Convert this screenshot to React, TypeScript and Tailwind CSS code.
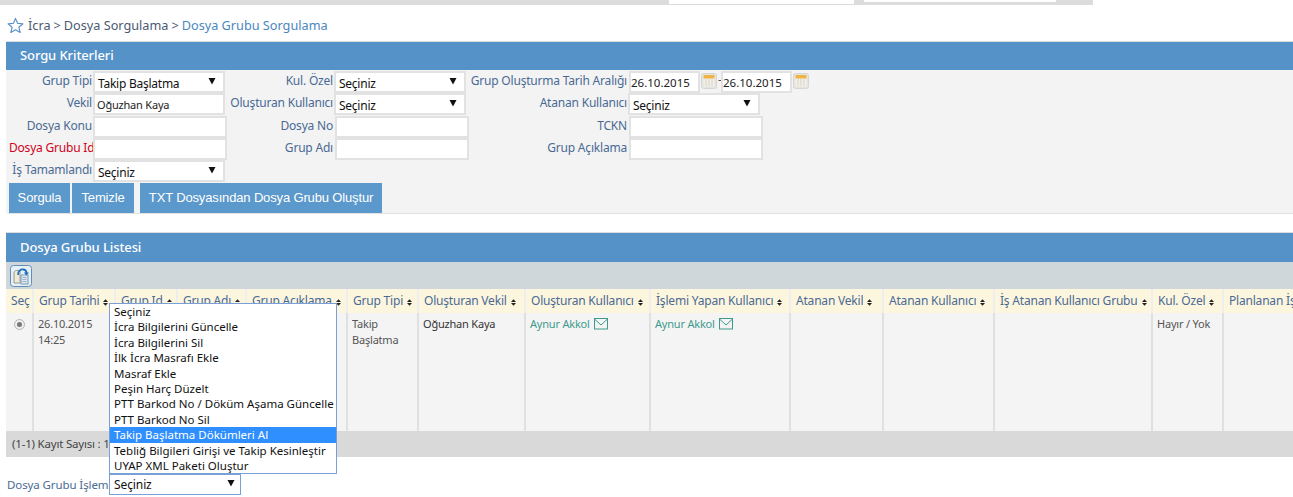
const ff = "font-['Noto_Sans','Open_Sans',sans-serif]";

function Tri() {
  return (
    <svg width="8" height="8" viewBox="0 0 8 8" className="shrink-0 mb-[3px]">
      <path d="M0.5 1H7.5L4 7.5Z" fill="#111" />
    </svg>
  );
}

function Select({ w, text }: { w: string; text: string }) {
  return (
    <div className={`${w} h-[22px] bg-white border-2 border-[#e2e2e2] flex items-center justify-between pl-[3px] pr-[7px] text-[12px] tracking-[-0.25px] text-[#111] leading-none`}>
      <span className="pt-[3px]">{text}</span>
      <Tri />
    </div>
  );
}

function Input({ w = "w-[134px]", text = "", className = "" }: { w?: string; text?: string; className?: string }) {
  return (
    <div className={`${w} h-[22px] bg-white border-2 border-[#e2e2e2] flex items-center pt-px text-[#222] leading-none whitespace-nowrap ${className}`}>
      {text}
    </div>
  );
}

function Label({ children, red }: { children: React.ReactNode; red?: boolean }) {
  return (
    <div className={`text-right pb-[3px] pr-px text-[12px] tracking-[-0.2px] leading-[18px] whitespace-nowrap ${red ? "text-[#d0021b]" : "text-[#4a6a94]"}`}>
      {children}
    </div>
  );
}

function Cal() {
  return (
    <svg width="16" height="16" viewBox="0 0 16 16" className="mx-[1px] mb-[2px] shrink-0">
      <rect x="0.5" y="0.5" width="15" height="15" rx="2" fill="#e4e4e2" stroke="#d6d6d4" />
      <rect x="2.5" y="2" width="11" height="11.5" fill="#f3f0e6" />
      <rect x="2.5" y="2" width="11" height="3.5" fill="#efb446" />
      <path d="M5 6V13M8 6V13M11 6V13" stroke="#d6d3ca" strokeWidth="1" />
    </svg>
  );
}

function PanelHeader({ title, h }: { title: string; h: string }) {
  return (
    <div className={`${h} bg-[#5592c8] text-white text-[13px] font-medium tracking-[-0.1px] flex items-center pl-[14px] border-t border-[#dcdcdc]`}>
      {title}
    </div>
  );
}

function Btn({ children, w }: { children: React.ReactNode; w: string }) {
  return (
    <div className={`${w} h-[30px] bg-[#5b98cb] text-white text-[13px] tracking-[-0.15px] font-['Liberation_Sans',sans-serif] flex items-center justify-center`}>
      {children}
    </div>
  );
}

function Sort() {
  return (
    <svg width="5" height="7" viewBox="0 0 6 8" className="inline-block ml-[4px] align-[-0.5px]">
      <path d="M3 0L6 3.3H0ZM3 8L0 4.7H6Z" fill="#222" />
    </svg>
  );
}

function Mail() {
  return (
    <svg width="14" height="12" viewBox="0 0 14 12" className="inline-block ml-[4px] align-[-2px]" fill="none" stroke="#3f9a8e">
      <rect x="0.5" y="0.5" width="13" height="10.5" />
      <path d="M0.5 1L7 7L13.5 1" />
    </svg>
  );
}

const cols = [
  { w: "w-[27px]", t: "Seç", sort: false },
  { w: "w-[82px]", t: "Grup Tarihi", sort: true },
  { w: "w-[62px]", t: "Grup Id", sort: true },
  { w: "w-[69px]", t: "Grup Adı", sort: true },
  { w: "w-[101px]", t: "Grup Açıklama", sort: true },
  { w: "w-[71px]", t: "Grup Tipi", sort: true },
  { w: "w-[107px]", t: "Oluşturan Vekil", sort: true },
  { w: "w-[125px]", t: "Oluşturan Kullanıcı", sort: true },
  { w: "w-[140px]", t: "İşlemi Yapan Kullanıcı", sort: true },
  { w: "w-[93px]", t: "Atanan Vekil", sort: true },
  { w: "w-[111px]", t: "Atanan Kullanıcı", sort: true },
  { w: "w-[158px]", t: "İş Atanan Kullanıcı Grubu", sort: true },
  { w: "w-[71px]", t: "Kul. Özel", sort: true },
  { w: "w-[120px]", t: "Planlanan İş", sort: false },
];

const options = [
  "Seçiniz",
  "İcra Bilgilerini Güncelle",
  "İcra Bilgilerini Sil",
  "İlk İcra Masrafı Ekle",
  "Masraf Ekle",
  "Peşin Harç Düzelt",
  "PTT Barkod No / Döküm Aşama Güncelle",
  "PTT Barkod No Sil",
  "Takip Başlatma Dökümleri Al",
  "Tebliğ Bilgileri Girişi ve Takip Kesinleştir",
  "UYAP XML Paketi Oluştur",
];

export default function App() {
  const cell = "border-r-2 border-[#e0e0e0] align-top pl-[4px] pt-[3px] text-[11px] tracking-[-0.2px] leading-[16px]";
  return (
    <div className={`w-[1293px] h-[497px] overflow-hidden bg-white relative ${ff}`}>
      {/* top strip */}
      <div className="w-[1093px] h-[5px] bg-[#dcdcdc] flex">
        <div className="ml-[669px] w-[185px] h-[4px] bg-white" />
        <div className="ml-[10px] w-[192px] h-[2px] bg-white" />
      </div>

      {/* breadcrumb */}
      <div className="h-[36px] pl-[7px] pt-[4px] flex items-center text-[12.7px] text-[#4a5a72] leading-none">
        <svg width="17" height="17" viewBox="0 0 24 24" fill="none" stroke="#5a8fc8" strokeWidth="1.6" strokeLinejoin="round" className="mr-[4px]">
          <path d="M12 2l3 7 7.5.6-5.7 4.9 1.8 7.4L12 18l-6.6 3.9 1.8-7.4L1.5 9.6 9 9z" />
        </svg>
        <span>İcra</span>
        <span className="mx-[3px]">&gt;</span>
        <span>Dosya Sorgulama</span>
        <span className="mx-[3px]">&gt;</span>
        <span className="text-[#4a87c0]">Dosya Grubu Sorgulama</span>
      </div>

      {/* criteria panel */}
      <div className="ml-[6px] rounded-bl-[4px] border-b border-[#e2e2e2] bg-[#f3f3f3]">
        <PanelHeader title="Sorgu Kriterleri" h="h-[29px]" />
        <div className="h-[143px] pl-[3px] pt-[1px]">
          <div className="grid grid-cols-[84px_136px_105px_135px_159px_1fr] grid-rows-[22px_22px_23px_22px_22px] items-end">
            <Label>Grup Tipi</Label>
            <Select w="w-[132px]" text="Takip Başlatma" />
            <Label>Kul. Özel</Label>
            <Select w="w-[132px]" text="Seçiniz" />
            <Label>Grup Oluşturma Tarih Aralığı</Label>
            <div className="flex items-center ml-px">
              <Input w="w-[71px]" text="26.10.2015" className="text-[11.5px]" />
              <Cal />
              <span className="w-[3px] text-[12px] text-[#555] pb-[4px] leading-none">-</span>
              <Input w="w-[71px]" text="26.10.2015" className="text-[11.5px]" />
              <Cal />
            </div>

            <Label>Vekil</Label>
            <Input w="w-[132px]" text="Oğuzhan Kaya" className="pl-[2px] text-[11px] tracking-[-0.2px]" />
            <Label>Oluşturan Kullanıcı</Label>
            <Select w="w-[132px]" text="Seçiniz" />
            <Label>Atanan Kullanıcı</Label>
            <Select w="w-[132px]" text="Seçiniz" />

            <Label>Dosya Konu</Label>
            <Input />
            <Label>Dosya No</Label>
            <Input className="ml-px" />
            <Label>TCKN</Label>
            <Input className="ml-px" />

            <Label red>Dosya Grubu Id</Label>
            <Input />
            <Label>Grup Adı</Label>
            <Input className="ml-px" />
            <Label>Grup Açıklama</Label>
            <Input className="ml-px" />

            <Label>İş Tamamlandı</Label>
            <Select w="w-[132px]" text="Seçiniz" />
          </div>
          <div className="flex gap-[2px] mt-[1px]">
            <Btn w="w-[61px]">Sorgula</Btn>
            <Btn w="w-[62px]">Temizle</Btn>
            <div className="w-[2px]" />
            <Btn w="w-[242px]">TXT Dosyasından Dosya Grubu Oluştur</Btn>
          </div>
        </div>
      </div>

      {/* list panel */}
      <div className="ml-[6px] mt-[18px]">
        <PanelHeader title="Dosya Grubu Listesi" h="h-[30px]" />
        <div className="h-[27px] bg-[#cfd7db] flex items-center pl-[4px]">
          <svg width="22" height="22" viewBox="0 0 22 22">
            <rect x="0.5" y="0.5" width="21" height="21" rx="3" fill="#e6f0f8" stroke="#5f8db5" />
            <path d="M4 18V8C4 6.5 5 5.5 6.5 5.5H10V18Z" fill="#efe9d8" stroke="#9a9a8c" />
            <rect x="11" y="10" width="7" height="9" fill="#dce9f4" stroke="#7d97ad" />
            <path d="M12.5 12.5H16.5M12.5 14.5H16.5M12.5 16.5H16.5" stroke="#8aa4ba" strokeWidth="0.8" />
            <path d="M8 10C8 6 10.5 4 13.5 4.5C15.5 4.8 16.5 6 16.5 8" stroke="#1f70bd" strokeWidth="1.8" fill="none" />
            <path d="M13.8 7.5H19L16.4 10.5Z" fill="#1f70bd" />
          </svg>
        </div>
        <table className="table-fixed border-collapse w-[1337px]">
          <thead>
            <tr className="h-[24px] bg-[#fdf6df]">
              {cols.map((c) => (
                <th key={c.t} className={`${c.w} border-r-2 border-[#eeeeee] font-normal text-left text-[12px] tracking-[-0.2px] text-[#4a6a94] whitespace-nowrap pl-[5px] p-0`}>
                  {c.t}
                  {c.sort && <Sort />}
                </th>
              ))}
            </tr>
          </thead>
          <tbody>
            <tr className="h-[118px] bg-[#f4f4f4] text-[#555]">
              <td className={cell}>
                <div className="w-[11px] h-[11px] mt-[3px] ml-[4px] rounded-full border border-[#b5b5b5] bg-[#eee] flex items-center justify-center">
                  <div className="w-[5px] h-[5px] rounded-full bg-[#777]" />
                </div>
              </td>
              <td className={cell}>26.10.2015<br />14:25</td>
              <td className={cell} />
              <td className={cell} />
              <td className={cell} />
              <td className={cell}>Takip<br />Başlatma</td>
              <td className={`${cell} text-[#333] whitespace-nowrap`}>Oğuzhan Kaya</td>
              <td className={`${cell} text-[#3f9a8e] whitespace-nowrap`}>Aynur Akkol<Mail /></td>
              <td className={`${cell} text-[#3f9a8e] whitespace-nowrap`}>Aynur Akkol<Mail /></td>
              <td className={cell} />
              <td className={cell} />
              <td className={cell} />
              <td className={cell}>Hayır / Yok</td>
              <td className={cell} />
            </tr>
          </tbody>
        </table>
        <div className="h-[26px] bg-[#d9d9d9] pl-[6px] text-[11.5px] tracking-[-0.2px] leading-[26px] text-[#444]">(1-1) Kayıt Sayısı : 1</div>
      </div>

      {/* bottom action */}
      <div className="flex items-center pl-[7px] mt-[17px] text-[11.5px] tracking-[-0.1px] text-[#4a6a94] leading-none">
        <span className="w-[102px] whitespace-nowrap">Dosya Grubu İşlem</span>
        <div className="w-[132px] h-[21px] bg-white border border-[#7a9fd6] flex items-center justify-between pl-[4px] pr-[5px] text-[12px] text-[#111]">
          <span className="pt-px">Seçiniz</span>
          <Tri />
        </div>
      </div>

      {/* open dropdown overlay */}
      <div className="absolute left-[109px] top-[303px] w-[228px] bg-white border border-[#7a9fd6] text-[11.5px] text-[#111]">
        {options.map((o) => (
          <div key={o} className={`h-[15.4px] leading-[15.4px] pl-[4px] whitespace-nowrap ${o.startsWith("Takip") ? "bg-[#2f8fff] text-white" : ""}`}>
            {o}
          </div>
        ))}
      </div>
    </div>
  );
}
